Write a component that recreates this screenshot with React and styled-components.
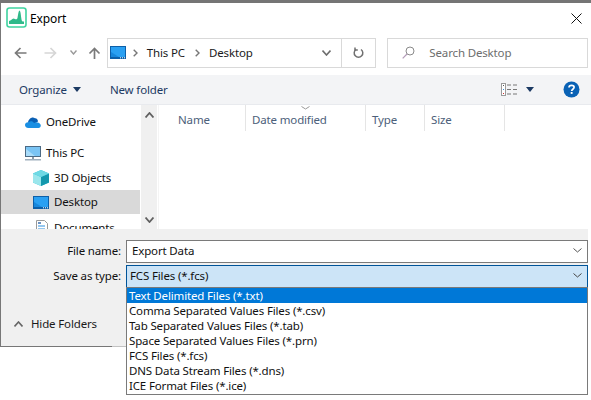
import React from "react";
import styled, { createGlobalStyle } from "styled-components";

const Global = createGlobalStyle`
  html, body { margin: 0; padding: 0; background: #fff; }
  * { box-sizing: border-box; }
  body { font-family: "Noto Sans", "Open Sans", sans-serif; font-size: 11.5px; letter-spacing: -0.15px; color: #111; }
`;
const Page = styled.div`width: 591px; height: 400px; overflow: hidden; background: #fff;`;
const TopStrip = styled.div`height: 3px; background: #757575;`;
const Window = styled.div`height: 344px; border-left: 1px solid #777; display: flex; flex-direction: column; background: #fff;`;
const TitleBar = styled.div`height: 30px; display: flex; align-items: center; padding-left: 5px; padding-right: 9px;`;
const AppMark = styled.span`display: flex; margin-top: -2px;`;
const TitleText = styled.span`margin-left: 3px; flex: 1; font-size: 12px; letter-spacing: -0.1px; color: #000;`;
const NavBar = styled.div`height: 42px; display: flex; align-items: center; padding: 0 3px 3px 13px;`;
const NavIcons = styled.div`display: flex; align-items: center; width: 93px;`;
const NavSlot = styled.span`display: flex; margin-left: ${p => p.$ml}px;`;
const AddressBox = styled.div`width: 270px; height: 30px; border: 1px solid #d9d9d9; display: flex; align-items: center; padding-left: 2px;`;
const Crumb = styled.span`color: #1a1a1a; margin: 0 10px 0 9px;`;
const CrumbStart = styled.span`display: flex; margin-left: 7px;`;
const AddressEnd = styled.div`margin-left: auto; display: flex; align-items: center; height: 100%;`;
const RefreshCell = styled.div`width: 34px; height: 100%; border-left: 1px solid #d9d9d9; margin-left: 10px; display: flex; align-items: center; justify-content: center;`;
const SearchBox = styled.div`width: 201px; height: 30px; margin-left: 11px; border: 1px solid #d9d9d9; display: flex; align-items: center; padding-left: 14px; color: #6d6d6d;`;
const SearchText = styled.span`margin-left: 14px;`;
const ToolBar = styled.div`height: 30px; background: #f3f4f6; border-bottom: 1px solid #e8eaee; display: flex; align-items: center; padding-left: 18px; color: #1c3a63;`;
const ToolItem = styled.span`display: flex; align-items: center; margin-left: ${p => p.$ml || 0}px;`;
const Main = styled.div`height: 124px; display: flex; overflow: hidden;`;
const Sidebar = styled.div`width: 140px; padding: 5px 1px 0 0; overflow: hidden;`;
const NavRow = styled.div`height: 24px; display: flex; align-items: center; padding-left: ${p => p.$indent}px; margin-top: ${p => p.$mt || 0}px; background: ${p => p.$active ? "#d9d9d9" : "transparent"}; color: #111;`;
const RowLabel = styled.span`margin-left: 5px; margin-bottom: 2px;`;
const ScrollBar = styled.div`width: 16px; background: #f0f0f0; display: flex; flex-direction: column; justify-content: space-between; align-items: center; padding: 7px 0 6px;`;
const FileList = styled.div`flex: 1; margin-left: 1px; border-left: 1px solid #f4f4f4;`;
const Headers = styled.div`display: flex; height: 26px;`;
const Col = styled.div`position: relative; width: ${p => p.$w}px; padding-left: ${p => p.$pl}px; padding-top: 2px; border-right: 1px solid #e5e5e5; display: flex; align-items: center; color: #4c607a;`;
const SortMark = styled.span`position: absolute; left: 55px; top: 1px; display: flex;`;
const Footer = styled.div`flex: 1; margin-right: 3px; background: #f0f0f0; border-bottom: 1px solid; border-image: linear-gradient(to right, #777 112px, #c2c2c2 112px) 1; padding-top: 11px;`;
const FieldRow = styled.div`display: flex; align-items: center; margin-bottom: ${p => p.$mb || 0}px;`;
const Label = styled.span`width: 120px; text-align: right; margin: 0 5px 2px 0; color: #111;`;
const Field = styled.div`position: relative; width: 462px; height: 23px; display: flex; align-items: center; justify-content: space-between; background: ${p => p.$open ? "#cce4f7" : "#fff"}; border: 1px solid ${p => p.$open ? "#005499" : "#7a7a7a"}; padding: 0 5px 2px ${p => p.$open ? 3 : 5}px; color: #111;`;
const Dropdown = styled.ul`position: absolute; left: -1px; right: -1px; top: 100%; margin: 0; padding: 0; height: 108px; list-style: none; background: #fff; border: 1px solid #7a7a7a; z-index: 2;`;
const Option = styled.li`height: 15px; line-height: 15px; padding-left: 2px; white-space: nowrap; background: ${p => p.$sel ? "#0078d7" : "transparent"}; color: ${p => p.$sel ? "#fff" : "#111"};`;
const HideRow = styled.div`display: flex; align-items: center; margin-top: 26px; padding-left: 13px; height: 20px; color: #1a1a1a;`;
const HideText = styled.span`margin: 0 0 2px 8px;`;
const Spacer = styled.span`flex: 1;`;

const Arrow = ({ dir, c }) => (
  <svg width="13" height="12" viewBox="0 0 13 12" fill="none" stroke={c} strokeWidth="1.7">
    {dir === "l" && <path d="M12.5 6H1.5M6.5 1L1.5 6l5 5" />}
    {dir === "r" && <path d="M.5 6h11M6.500 1l5 5-5 5" />}
    {dir === "u" && <path d="M6.500 12V1.500M1.500 6.500l5-5 5 5" />}
  </svg>
);
const Chev = ({ w = 8, h = 5, c = "#666", sw = 1.4, up }) => (
  <svg width={w} height={h} viewBox={`0 0 ${w} ${h}`} fill="none" stroke={c} strokeWidth={sw}>
    <path d={up ? `M.5 ${h - .5}L${w / 2} 1 ${w - .5} ${h - .5}` : `M.5 .5L${w / 2} ${h - 1} ${w - .5} .5`} />
  </svg>
);
const Caret = ({ c = "#1c3a63" }) => (
  <svg width="8" height="5" viewBox="0 0 8 5"><path d="M0 0h8L4 5z" fill={c} /></svg>
);
const CrumbArrow = () => (
  <svg width="5" height="8" viewBox="0 0 5 8" fill="none" stroke="#777" strokeWidth="1.4"><path d="M.7.7L4 4 .7 7.3" /></svg>
);
const DesktopIcon = () => (
  <svg width="16" height="13" viewBox="0 0 16 13">
    <rect width="16" height="13" fill="#0d5fa8" />
    <rect x="1" y="1" width="14" height="10" fill="#2aa0f2" />
    <path d="M1 11V6l8 5z" fill="#1787dc" />
    <path d="M10 11.800h1M12 11.800h1M14 11.800h1" stroke="#fff" />
    <rect y="12" width="9" height="1" fill="#0d5fa8" />
  </svg>
);
const AppIcon = () => (
  <svg width="21" height="21" viewBox="0 0 21 21">
    <rect x="1" y="1" width="19" height="19" rx="2.500" fill="#fff" stroke="#3fd3a0" strokeWidth="1.600" />
    <path d="M3 17v-3c2 0 3-2.500 4.500-2.500S9.500 13 11 12c1-.8 1-8 2.500-8.500C15 4 15 12 16 14c.4.6 1.300.5 2 .5V17z" fill="#2fb98a" />
  </svg>
);
const Close = () => (
  <svg width="11" height="11" viewBox="0 0 11 11" stroke="#111" strokeWidth="1"><path d="M.5.5l10 10M10.500.5l-10 10" /></svg>
);
const Refresh = () => (
  <svg width="11" height="12" viewBox="0 0 11 12" fill="none" stroke="#707070" strokeWidth="1.500">
    <path d="M3 2.500a4.300 4.300 0 1 0 5 0" />
    <path d="M2 .5v2.600h2.800" />
  </svg>
);
const SearchIcon = () => (
  <svg width="13" height="13" viewBox="0 0 13 13" fill="none">
    <circle cx="8" cy="5" r="4" stroke="#8a8a8a" />
    <path d="M5 8L.7 12.300" stroke="#b39bb8" strokeWidth="1.200" />
  </svg>
);
const ViewIcon = () => (
  <svg width="16" height="13" viewBox="0 0 16 13">
    <rect x=".5" y=".5" width="4" height="12" fill="#fff" stroke="#9a9a9a" />
    <rect x="2" y="2" width="1" height="1" fill="#555" />
    <rect x="2" y="6" width="1" height="1" fill="#3a8fe0" />
    <rect x="2" y="10" width="1" height="1" fill="#d03030" />
    <path d="M6 2h4M12 2h4M6 6.500h4M12 6.500h4M6 11h4M12 11h4" stroke="#777" />
  </svg>
);
const HelpIcon = () => (
  <svg width="17" height="17" viewBox="0 0 17 17">
    <circle cx="8.500" cy="8.500" r="8" fill="#0a62b5" />
    <path d="M6 6.600c0-1.500 1.100-2.300 2.600-2.300s2.500.8 2.500 2c0 1.900-2.400 1.900-2.400 3.600" fill="none" stroke="#fff" strokeWidth="1.700" />
    <rect x="7.700" y="11" width="1.900" height="1.900" fill="#fff" />
  </svg>
);
const OneDrive = () => (
  <svg width="16" height="11" viewBox="0 0 16 11">
    <path d="M3 5.500C3.500 2 7-.8 10 1.200 11.500.9 13 2.600 13 4.500L7 8z" fill="#0a5fb4" />
    <path d="M3.500 11C1 11 0 9.500 0 8c0-1.800 1.400-3 3.500-2.800 2-1.500 4.500-1 5.500.8 2-1.200 5-.8 6.500 1.500.8 1.500-.2 3.500-2 3.500z" fill="#1a8fe3" />
  </svg>
);
const PcIcon = () => (
  <svg width="16" height="15" viewBox="0 0 16 15">
    <rect x=".5" y=".5" width="15" height="10" fill="#7ac4f4" stroke="#4c6a84" />
    <path d="M1 10V3l9 7z" fill="#a9dcfa" />
    <rect x="7" y="11" width="2" height="2" fill="#8a9aa8" />
    <rect y="13" width="16" height="1.500" fill="#9fb0be" />
  </svg>
);
const CubeIcon = () => (
  <svg width="16" height="16" viewBox="0 0 16 16">
    <path d="M8 0l8 3.500v9L8 16 0 12.500v-9z" fill="#2dc3d6" />
    <path d="M0 3.500L8 7v9L0 12.500z" fill="#9be6ec" />
    <path d="M16 3.500L8 7v9l8-3.500z" fill="#1498ad" />
    <path d="M8 0l8 3.500L8 7 0 3.500z" fill="#6ed9e4" />
  </svg>
);
const DocIcon = () => (
  <svg width="14" height="16" viewBox="0 0 14 16">
    <path d="M1.500.5h8l3 3v12h-11z" fill="#fff" stroke="#9a9a9a" />
    <path d="M3 6h7M3 9h7M3 12h7" stroke="#2b8fe0" />
    <path d="M3 3h3" stroke="#3a6fb0" strokeWidth="1.500" />
  </svg>
);

const options = [
  "Text Delimited Files (*.txt)",
  "Comma Separated Values Files (*.csv)",
  "Tab Separated Values Files (*.tab)",
  "Space Separated Values Files (*.prn)",
  "FCS Files (*.fcs)",
  "DNS Data Stream Files (*.dns)",
  "ICE Format Files (*.ice)",
];

export default function App() {
  return (
    <Page>
      <Global />
      <TopStrip />
      <Window>
        <TitleBar>
          <AppMark><AppIcon /></AppMark>
          <TitleText>Export</TitleText>
          <Close />
        </TitleBar>
        <NavBar>
          <NavIcons>
            <NavSlot $ml={0}><Arrow dir="l" c="#7a7a7a" /></NavSlot>
            <NavSlot $ml={17}><Arrow dir="r" c="#d6d6d6" /></NavSlot>
            <NavSlot $ml={13}><Chev w={7} h={5} c="#999" /></NavSlot>
            <NavSlot $ml={11}><Arrow dir="u" c="#7a7a7a" /></NavSlot>
          </NavIcons>
          <AddressBox>
            <DesktopIcon />
            <CrumbStart><CrumbArrow /></CrumbStart>
            <Crumb>This PC</Crumb>
            <CrumbArrow />
            <Crumb>Desktop</Crumb>
            <AddressEnd>
              <Chev w={9} h={6} c="#6e6e6e" sw={1.6} />
              <RefreshCell><Refresh /></RefreshCell>
            </AddressEnd>
          </AddressBox>
          <SearchBox>
            <SearchIcon />
            <SearchText>Search Desktop</SearchText>
          </SearchBox>
        </NavBar>
        <ToolBar>
          <ToolItem>Organize</ToolItem>
          <ToolItem $ml={6}><Caret /></ToolItem>
          <ToolItem $ml={29}>New folder</ToolItem>
          <Spacer />
          <ToolItem><ViewIcon /></ToolItem>
          <ToolItem $ml={9}><Caret /></ToolItem>
          <ToolItem $ml={29}><HelpIcon /></ToolItem>
          <ToolItem $ml={11} />
        </ToolBar>
        <Main>
          <Sidebar>
            <NavRow $indent={24}><OneDrive /><RowLabel>OneDrive</RowLabel></NavRow>
            <NavRow $indent={24} $mt={7}><PcIcon /><RowLabel>This PC</RowLabel></NavRow>
            <NavRow $indent={32} $mt={1}><CubeIcon /><RowLabel>3D Objects</RowLabel></NavRow>
            <NavRow $indent={32} $active><DesktopIcon /><RowLabel>Desktop</RowLabel></NavRow>
            <NavRow $indent={34} $mt={2}><DocIcon /><RowLabel>Documents</RowLabel></NavRow>
          </Sidebar>
          <ScrollBar>
            <Chev w={9} h={6} c="#606060" sw={1.8} up />
            <Chev w={9} h={6} c="#606060" sw={1.8} />
          </ScrollBar>
          <FileList>
            <Headers>
              <Col $w={87} $pl={19}>Name</Col>
              <Col $w={120} $pl={6}>
                <SortMark><Chev w={9} h={4} c="#9a9a9a" sw={1} /></SortMark>
                Date modified
              </Col>
              <Col $w={59} $pl={6}>Type</Col>
              <Col $w={80} $pl={6}>Size</Col>
            </Headers>
          </FileList>
        </Main>
        <Footer>
          <FieldRow $mb={2}>
            <Label>File name:</Label>
            <Field>
              <span>Export Data</span>
              <Chev w={9} h={5} c="#555" sw={1} />
            </Field>
          </FieldRow>
          <FieldRow>
            <Label>Save as type:</Label>
            <Field $open>
              <span>FCS Files (*.fcs)</span>
              <Chev w={9} h={5} c="#444" sw={1} />
              <Dropdown>
                {options.map((o, i) => <Option key={o} $sel={i === 0}>{o}</Option>)}
              </Dropdown>
            </Field>
          </FieldRow>
          <HideRow>
            <Chev w={9} h={6} c="#666" sw={1.6} up />
            <HideText>Hide Folders</HideText>
          </HideRow>
        </Footer>
      </Window>
    </Page>
  );
}
